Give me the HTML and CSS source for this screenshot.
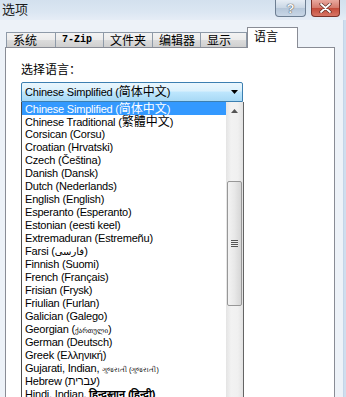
FILE: index.html
```html
<!DOCTYPE html>
<html>
<head>
<meta charset="utf-8">
<link rel="stylesheet" href="styles.css">
</head>
<body>
<div class="window">
  <div class="titlebar">
    <div class="title">选项</div>
    <div class="ctrls">
      <div class="btn help">?</div>
      <div class="btn close">
        <svg width="13" height="10" viewBox="0 0 13 10"><path d="M2 1 L11 9 M11 1 L2 9" stroke="#5a2a22" stroke-width="3.2" stroke-linecap="round"/><path d="M2 1 L11 9 M11 1 L2 9" stroke="#fff" stroke-width="1.8" stroke-linecap="round"/></svg>
      </div>
    </div>
  </div>
  <div class="client">
    <div class="tabs">
      <div class="tab w49">系统</div>
      <div class="tab w48 mono">7-Zip</div>
      <div class="tab w49">文件夹</div>
      <div class="tab w48">编辑器</div>
      <div class="tab w46">显示</div>
      <div class="tab sel">语言</div>
    </div>
    <div class="panel">
      <div class="label">选择语言：</div>
      <div class="combo">
        <span class="combo-text">Chinese Simplified (<span class="cjk">简体中文</span>)</span>
        <svg class="arrow" width="7" height="4" viewBox="0 0 7 4"><path d="M0 0 H7 L3.5 4 Z" fill="#000"/></svg>
      </div>
      <div class="list">
        <div class="items">
          <div class="item hl">Chinese Simplified (<span class="cjk">简体中文</span>)</div>
          <div class="item">Chinese Traditional (<span class="cjk">繁體中文</span>)</div>
          <div class="item">Corsican (Corsu)</div>
          <div class="item">Croatian (Hrvatski)</div>
          <div class="item">Czech (Čeština)</div>
          <div class="item">Danish (Dansk)</div>
          <div class="item">Dutch (Nederlands)</div>
          <div class="item">English (English)</div>
          <div class="item">Esperanto (Esperanto)</div>
          <div class="item">Estonian (eesti keel)</div>
          <div class="item">Extremaduran (Estremeñu)</div>
          <div class="item">Farsi (<span class="ar">فارسی</span>)</div>
          <div class="item">Finnish (Suomi)</div>
          <div class="item">French (Français)</div>
          <div class="item">Frisian (Frysk)</div>
          <div class="item">Friulian (Furlan)</div>
          <div class="item">Galician (Galego)</div>
          <div class="item">Georgian (<span class="ka">ქართული</span>)</div>
          <div class="item">German (Deutsch)</div>
          <div class="item">Greek (Ελληνική)</div>
          <div class="item">Gujarati, Indian, <span class="gu">ગુજરાતી (ગુજરાતી)</span></div>
          <div class="item">Hebrew (עברית)</div>
          <div class="item">Hindi, Indian, <span class="hi">हिन्दुस्तान (हिन्दी)</span></div>
        </div>
        <div class="scroll">
          <div class="up"><svg width="7" height="4" viewBox="0 0 7 4"><path d="M0 4 H7 L3.5 0 Z" fill="#555"/></svg></div>
          <div class="thumb"><div class="grip"></div></div>
        </div>
      </div>
    </div>
  </div>
</div>
</body>
</html>
```
FILE: styles.css
```css
html, body {
  margin: 0;
  padding: 0;
}
body {
  width: 346px;
  height: 397px;
  overflow: hidden;
}
.window {
  width: 346px;
  height: 397px;
  overflow: hidden;
  background: linear-gradient(to right, #edf2f8 0, #edf2f8 343px, #b9cde3 343px, #cfdeee 344px);
  font-family: "Liberation Sans", "Noto Sans CJK SC", sans-serif;
}
.titlebar {
  height: 20px;
  display: flex;
  align-items: flex-start;
  background: linear-gradient(to bottom, #d3e0ee 0, #dbe6f2 60%, #e6edf6 100%);
}
.title {
  font-family: "Noto Sans CJK SC", sans-serif;
  font-size: 13px;
  line-height: 18px;
  color: #1b1b1b;
  padding-left: 2px;
}
.ctrls {
  margin-left: auto;
  margin-right: 6px;
  display: flex;
  gap: 5px;
}
.btn {
  height: 17px;
  box-sizing: border-box;
  border: 1px solid #6d7e92;
  border-top: none;
  border-radius: 0 0 4px 4px;
  display: flex;
  align-items: center;
  justify-content: center;
}
.help {
  width: 31px;
  background: linear-gradient(to bottom, #e6edf5 0, #c9d6e4 50%, #b5c6d9 51%, #c8d6e6 100%);
  color: #f4f7fb;
  font-family: "Liberation Sans", sans-serif;
  font-weight: bold;
  font-size: 13px;
  text-shadow: 0 0 1px #444, 0 0 1px #444;
}
.close {
  width: 29px;
  border-color: #7a3129;
  background: linear-gradient(to bottom, #e9a99f 0, #d4786a 50%, #c34a39 51%, #d77565 100%);
}
.client {
  padding-top: 7px;
}
.tabs {
  display: flex;
  align-items: flex-end;
  padding-left: 6px;
  height: 20px;
  position: relative;
  z-index: 1;
}
.tab {
  box-sizing: border-box;
  height: 15px;
  border: 1px solid #8e9aa8;
  border-bottom: none;
  background: linear-gradient(to bottom, #f3f3f3 0, #ebebeb 50%, #dcdcdc 51%, #cfcfcf 100%);
  font-family: "Noto Sans CJK SC", sans-serif;
  font-size: 12px;
  line-height: 14px;
  color: #000;
  padding-left: 6px;
  white-space: nowrap;
  margin-right: -1px;
}
.w49 { width: 50px; }
.w48 { width: 49px; }
.w46 { width: 47px; }
.mono {
  font-family: "Liberation Mono", monospace;
  font-size: 10px;
  font-weight: bold;
  letter-spacing: 0;
}
.tab.sel {
  height: 21px;
  width: 51px;
  margin-bottom: -1px;
  margin-left: 1px;
  background: #fff;
  border-color: #898c95;
  padding-left: 6px;
  line-height: 15px;
}
.panel {
  margin-left: 5px;
  width: 330px;
  height: 360px;
  box-sizing: border-box;
  border: 1px solid #898c95;
  background: #fff;
  padding: 13px 0 0 15px;
}
.label {
  font-family: "Noto Sans CJK SC", sans-serif;
  font-size: 12px;
  line-height: 16px;
  color: #000;
}
.combo {
  margin-top: 5px;
  width: 222px;
  height: 20px;
  box-sizing: border-box;
  border: 1px solid #3c7fb1;
  border-radius: 2px 2px 0 0;
  background: linear-gradient(to bottom, #eaf6fd 0, #d9f0fc 45%, #bee6fd 50%, #a7d9f5 100%);
  display: flex;
  align-items: center;
  padding-left: 3px;
  padding-right: 4px;
}
.combo-text {
  font-size: 11px;
  line-height: 14px;
  color: #000;
  white-space: nowrap;
  letter-spacing: -0.2px;
}
.arrow {
  margin-left: auto;
}
.cjk {
  font-family: "Noto Sans CJK SC", sans-serif;
  font-size: 12px;
  line-height: 12px;
  letter-spacing: 0;
}
.list {
  width: 223px;
  height: 300px;
  box-sizing: border-box;
  border-left: 1px solid #4b4b4b;
  border-right: 1px solid #646464;
  display: flex;
}
.items {
  flex: 1;
  min-width: 0;
}
.item {
  height: 13px;
  line-height: 13px;
  font-size: 11px;
  letter-spacing: -0.2px;
  padding-left: 3px;
  white-space: nowrap;
  color: #000;
}
.item.hl {
  background: #3399ff;
  color: #fff;
}
.ar { font-family: "DejaVu Sans", sans-serif; font-size: 10px; line-height: 10px; }
.ka { font-family: "DejaVu Sans", sans-serif; font-size: 7px; line-height: 7px; letter-spacing: 0; }
.gu { font-size: 7px; line-height: 7px; letter-spacing: 0; }
.hi { font-size: 11px; line-height: 11px; font-weight: bold; }
.scroll {
  width: 17px;
  flex: none;
  background: linear-gradient(to right, #e4e4e4 0, #f2f2f2 30%, #f0f0f0 70%, #e2e2e2 100%);
}
.up {
  height: 17px;
  display: flex;
  justify-content: center;
  align-items: center;
}
.thumb {
  margin: 62px 1px 0 1px;
  height: 125px;
  box-sizing: border-box;
  border: 1px solid #979797;
  border-radius: 2px;
  background: linear-gradient(to right, #f3f3f3 0, #e8e8e8 50%, #d6d6d6 100%);
  display: flex;
  align-items: center;
  justify-content: center;
}
.grip {
  width: 7px;
  height: 7px;
  background: repeating-linear-gradient(to bottom, #555 0, #555 1px, #eee 1px, #eee 2px);
}
```
